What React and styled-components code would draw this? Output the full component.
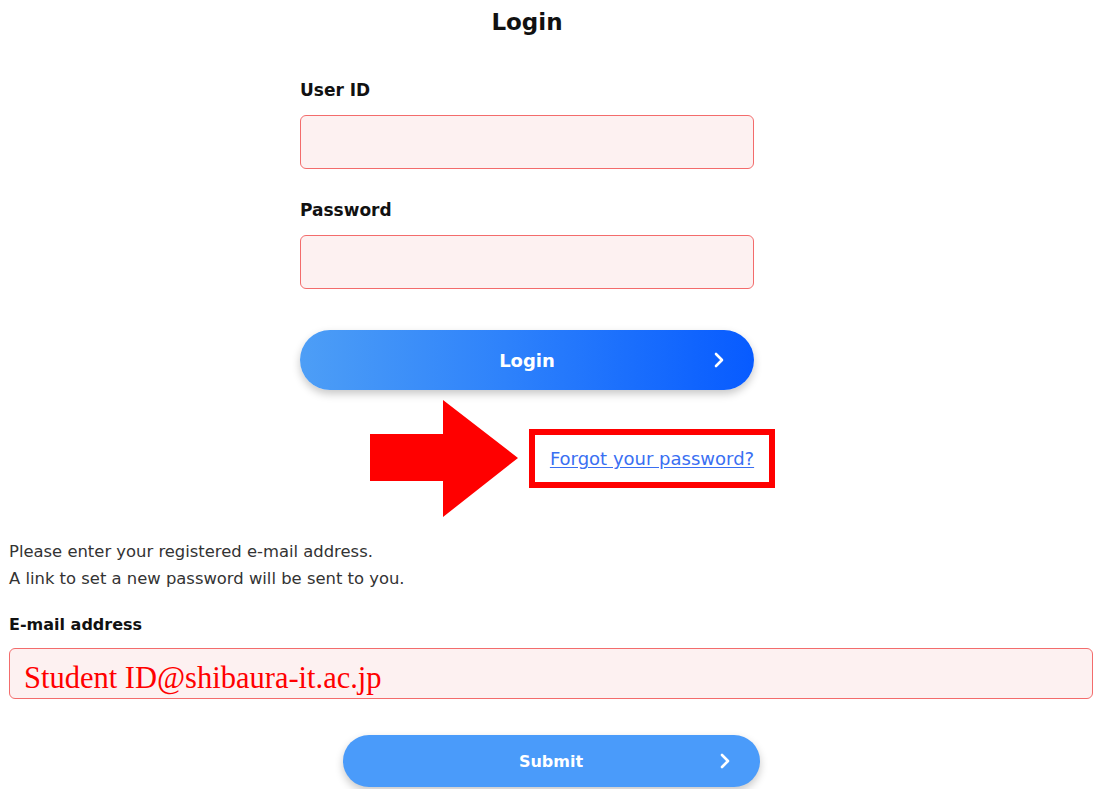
import React from "react";
import styled, { createGlobalStyle } from "styled-components";

const GlobalStyle = createGlobalStyle`
  html, body {
    margin: 0;
    padding: 0;
    background: #ffffff;
    font-family: "DejaVu Sans", "Noto Sans", sans-serif;
    color: #111;
    overflow: hidden;
  }
`;

const Page = styled.div`
  width: 1094px;
  height: 789px;
  overflow: hidden;
`;

const LoginForm = styled.form`
  width: 454px;
  margin-left: 300px;
  display: flex;
  flex-direction: column;
`;

const Title = styled.h1`
  margin: 0;
  padding-top: 6px;
  line-height: 32px;
  font-size: 23px;
  font-weight: bold;
  text-align: center;
`;

const Label = styled.label`
  display: block;
  font-size: ${(p) => (p.small ? "16px" : "17px")};
  font-weight: bold;
  line-height: 24px;
  margin-top: ${(p) => p.top || 0}px;
`;

const Field = styled.div`
  box-sizing: border-box;
  height: ${(p) => p.h || 54}px;
  margin-top: ${(p) => p.gap || 13}px;
  border: 1px solid #f36c6c;
  border-radius: 6px;
  background: #fdf1f1;
  display: flex;
  align-items: center;
  padding-left: 14px;
`;

const Sample = styled.span`
  font-family: "Liberation Serif", "Times New Roman", serif;
  font-size: 30.5px;
  color: #ff0000;
  padding-top: 10px;
`;

const PillButton = styled.button`
  position: relative;
  box-sizing: border-box;
  width: ${(p) => p.w || 454}px;
  height: ${(p) => p.h || 60}px;
  margin-top: ${(p) => p.top || 0}px;
  border: none;
  border-radius: 30px;
  background: ${(p) =>
    p.flat ? "#4a9bfa" : "linear-gradient(90deg, #4d9ef6 0%, #2e82fb 45%, #075bff 100%)"};
  box-shadow: 0 4px 8px rgba(0, 0, 0, 0.22);
  color: #fff;
  font-family: "DejaVu Sans", sans-serif;
  font-size: ${(p) => (p.flat ? "16px" : "18px")};
  font-weight: bold;
  display: flex;
  align-items: center;
  justify-content: center;
  padding: 0;
`;

const Chevron = styled.svg`
  position: absolute;
  right: 30px;
  top: 50%;
  transform: translateY(-50%);
`;

const ForgotRow = styled.div`
  display: flex;
  align-items: center;
  margin-left: 370px;
  margin-top: 10px;
`;

const Frame = styled.div`
  box-sizing: border-box;
  width: 246px;
  height: 59px;
  margin-left: 11px;
  border: 6px solid #ff0000;
  display: flex;
  align-items: center;
  justify-content: center;
`;

const Link = styled.a`
  font-size: 18px;
  color: #3a6ff2;
  text-decoration: underline;
  text-underline-offset: 2px;
  cursor: pointer;
`;

const ResetSection = styled.section`
  width: 1084px;
  margin-left: 9px;
  margin-top: 21px;
  display: flex;
  flex-direction: column;
`;

const Note = styled.p`
  margin: 0;
  font-size: 16.4px;
  line-height: 27px;
  color: #333;
`;

const Centered = styled.div`
  display: flex;
  justify-content: center;
  margin-top: 36px;
`;

function Arrow() {
  return (
    <svg width="148" height="117" viewBox="0 0 148 117">
      <polygon points="0,34 73,34 73,0 148,58 73,117 73,81 0,81" fill="#ff0000" />
    </svg>
  );
}

function Next() {
  return (
    <Chevron width="10" height="16" viewBox="0 0 10 16">
      <polyline points="2,2 8,8 2,14" fill="none" stroke="#fff" strokeWidth="2.6" strokeLinecap="round" strokeLinejoin="round" />
    </Chevron>
  );
}

export default function App() {
  return (
    <Page>
      <GlobalStyle />
      <LoginForm>
        <Title>Login</Title>
        <Label top={40}>User ID</Label>
        <Field />
        <Label top={29}>Password</Label>
        <Field />
        <PillButton type="button" top={41}>
          Login
          <Next />
        </PillButton>
      </LoginForm>

      <ForgotRow>
        <Arrow />
        <Frame>
          <Link>Forgot your password?</Link>
        </Frame>
      </ForgotRow>

      <ResetSection>
        <Note>Please enter your registered e-mail address.</Note>
        <Note>A link to set a new password will be sent to you.</Note>
        <Label small top={21}>E-mail address</Label>
        <Field h={51} gap={11}>
          <Sample>Student ID@shibaura-it.ac.jp</Sample>
        </Field>
        <Centered>
          <PillButton type="button" flat w={417} h={52}>
            Submit
            <Next />
          </PillButton>
        </Centered>
      </ResetSection>
    </Page>
  );
}
